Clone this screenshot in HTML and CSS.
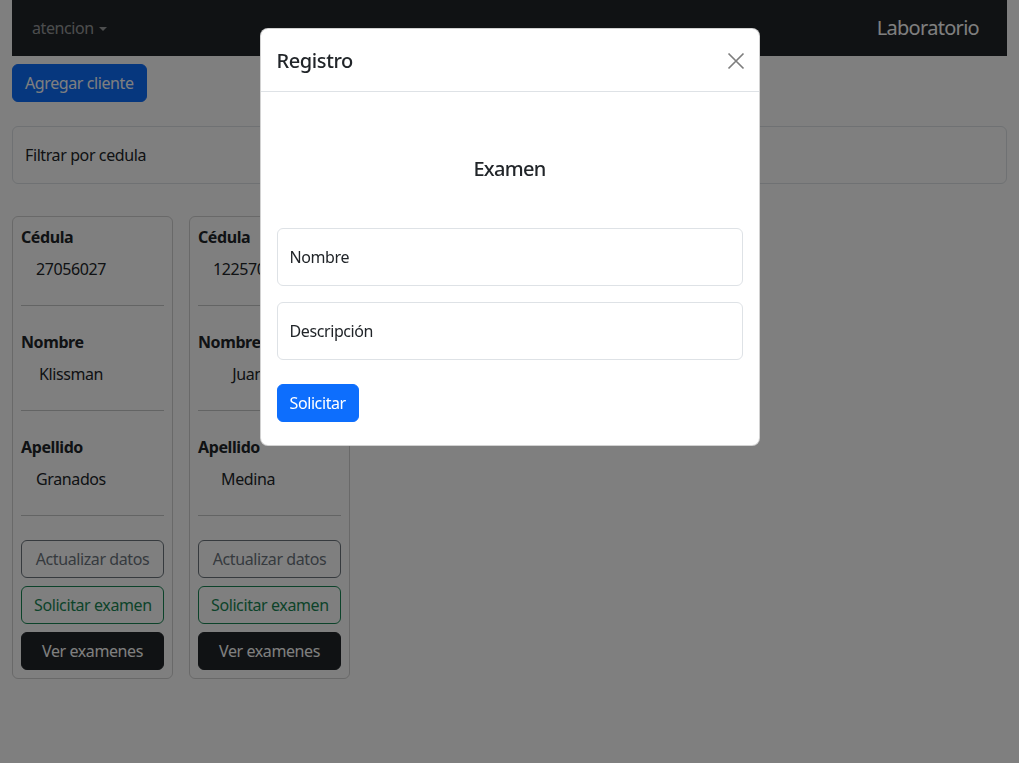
FILE: index.html
```html
<!DOCTYPE html>
<html lang="es">
<head>
<meta charset="utf-8">
<title>Laboratorio</title>
<link rel="stylesheet" href="styles.css">
</head>
<body>
<div class="page">
  <nav class="navbar">
    <div class="nav-inner">
      <a class="nav-link dropdown-toggle">atencion</a>
      <a class="brand">Laboratorio</a>
    </div>
  </nav>

  <button class="btn btn-primary add-btn">Agregar cliente</button>

  <div class="filter">
    <span class="float-label">Filtrar por cedula</span>
  </div>

  <div class="cards">
    <div class="card">
      <div class="label">Cédula</div>
      <div class="value">27056027</div>
      <hr class="sep">
      <div class="label">Nombre</div>
      <div class="value">Klissman</div>
      <hr class="sep">
      <div class="label">Apellido</div>
      <div class="value">Granados</div>
      <hr class="sep">
      <div class="actions">
        <button class="btn btn-outline-secondary">Actualizar datos</button>
        <button class="btn btn-outline-success">Solicitar examen</button>
        <button class="btn btn-dark">Ver examenes</button>
      </div>
    </div>
    <div class="card">
      <div class="label">Cédula</div>
      <div class="value">12257093</div>
      <hr class="sep">
      <div class="label">Nombre</div>
      <div class="value">Juan</div>
      <hr class="sep">
      <div class="label">Apellido</div>
      <div class="value">Medina</div>
      <hr class="sep">
      <div class="actions">
        <button class="btn btn-outline-secondary">Actualizar datos</button>
        <button class="btn btn-outline-success">Solicitar examen</button>
        <button class="btn btn-dark">Ver examenes</button>
      </div>
    </div>
  </div>
</div>

<div class="backdrop"></div>

<div class="modal">
  <div class="modal-content">
    <div class="modal-header">
      <h5 class="modal-title">Registro</h5>
      <button class="btn-close" aria-label="Close">
        <svg width="18" height="18" viewBox="0 0 18 18"><path d="M1.5 1.5 L16.5 16.5 M16.5 1.5 L1.5 16.5" stroke="#000" stroke-width="1.7" fill="none"/></svg>
      </button>
    </div>
    <div class="modal-body">
      <h5 class="form-title">Examen</h5>
      <div class="field"><span class="float-label">Nombre</span></div>
      <div class="field"><span class="float-label">Descripción</span></div>
      <button class="btn btn-primary submit">Solicitar</button>
    </div>
  </div>
</div>
</body>
</html>
```

FILE: styles.css
```css
* { box-sizing: border-box; }

html, body {
  margin: 0;
  padding: 0;
  height: 100%;
}

body {
  font-family: "Noto Sans", "Open Sans", sans-serif;
  font-size: 16px;
  line-height: 1.5;
  letter-spacing: -0.025em;
  color: #212529;
  background: #fff;
  overflow: hidden;
}

.page {
  padding: 0 12px;
}

/* Navbar */
.navbar {
  background: #212529;
  padding: 8px 0;
}

.nav-inner {
  display: flex;
  align-items: center;
  justify-content: space-between;
  padding: 0 12px;
}

.nav-link {
  display: block;
  padding: 8px;
  color: rgba(255, 255, 255, 0.55);
  line-height: 24px;
}

.dropdown-toggle::after {
  content: "";
  display: inline-block;
  margin-left: 5px;
  vertical-align: 3px;
  border-top: 4.8px solid;
  border-right: 4.8px solid transparent;
  border-left: 4.8px solid transparent;
}

.brand {
  color: #fff;
  font-size: 20px;
  letter-spacing: -0.035em;
  line-height: 30px;
  padding: 5px 0;
  margin-right: 16px;
}

/* Buttons */
.btn {
  display: inline-block;
  font-family: inherit;
  font-size: 16px;
  letter-spacing: inherit;
  line-height: 24px;
  padding: 6px 12px;
  border: 1px solid transparent;
  border-radius: 6px;
  background: transparent;
  cursor: pointer;
  text-align: center;
  white-space: nowrap;
}

.btn-primary {
  background: #0d6efd;
  border-color: #0d6efd;
  color: #fff;
}

.btn-outline-secondary {
  color: #6c757d;
  border-color: #6c757d;
}

.btn-outline-success {
  color: #198754;
  border-color: #198754;
}

.btn-dark {
  background: #212529;
  border-color: #212529;
  color: #fff;
}

.add-btn {
  margin-top: 8px;
}

/* Filter */
.filter,
.field {
  height: 58px;
  border: 1px solid #dee2e6;
  border-radius: 6px;
  background: #fff;
  padding: 16px 12px;
  display: flex;
  align-items: center;
}

.filter {
  margin-top: 24px;
}

.float-label {
  color: #212529;
  line-height: 24px;
}

/* Cards */
.cards {
  display: flex;
  gap: 16px;
  margin-top: 32px;
}

.card {
  width: 161px;
  border: 1px solid rgba(0, 0, 0, 0.175);
  border-radius: 6px;
  padding: 8px;
}

.label {
  font-weight: 700;
  line-height: 24px;
}

.value {
  width: 100px;
  text-align: center;
  line-height: 24px;
  margin-top: 8px;
}

.sep {
  border: 0;
  border-top: 1px solid #212529;
  opacity: 0.25;
  margin: 24px 0 24px;
}

.actions {
  display: flex;
  flex-direction: column;
  gap: 8px;
}

.actions .btn {
  width: 100%;
}

/* Backdrop & modal */
.backdrop {
  position: fixed;
  inset: 0;
  background: rgba(0, 0, 0, 0.5);
}

.modal {
  position: fixed;
  inset: 0;
  padding-top: 28px;
}

.modal-content {
  width: 500px;
  margin: 0 auto;
  background: #fff;
  border: 1px solid rgba(0, 0, 0, 0.175);
  border-radius: 8px;
}

.modal-header {
  display: flex;
  align-items: center;
  padding: 17px 16px 15px;
  border-bottom: 1px solid #dee2e6;
}

.modal-title {
  margin: 0;
  font-size: 20px;
  font-weight: 500;
  line-height: 30px;
}

.btn-close {
  margin-left: auto;
  margin-right: -2px;
  width: 18px;
  height: 18px;
  padding: 0;
  border: 0;
  background: transparent;
  opacity: 0.5;
  display: flex;
  cursor: pointer;
}

.modal-body {
  padding: 16px 16px 15px;
}

.form-title {
  margin: 46px 0 44px;
  font-size: 20px;
  font-weight: 500;
  letter-spacing: -0.035em;
  line-height: 30px;
  text-align: center;
}

.field {
  margin-bottom: 16px;
}

.submit {
  margin-top: 8px;
  margin-bottom: 8px;
}
```
